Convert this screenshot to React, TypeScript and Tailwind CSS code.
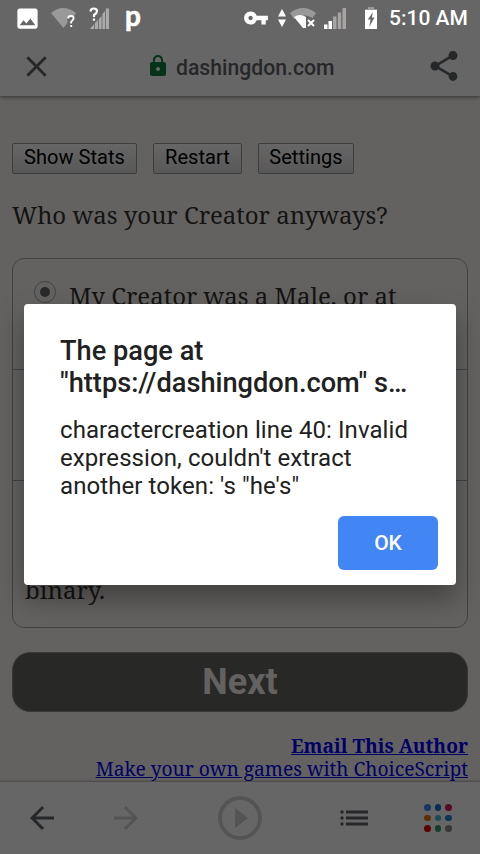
import { MdArrowBack, MdArrowForward, MdClose, MdImage, MdLock, MdShare, MdVpnKey } from "react-icons/md";

const apps = [
  "#4285f4", "#1a73c8", "#d81b60",
  "#e8750c", "#4fb3d9", "#1e88d8",
  "#e60000", "#2e9e6b", "#8c8c8c",
];

function StatusBar() {
  return (
    <div className="absolute inset-x-0 top-0 z-20 flex h-9 items-center text-white">
      <MdImage size={27} className="ml-[13.5px] shrink-0" />
      <svg className="ml-[9.5px] shrink-0" width="28" height="24" viewBox="0 0 28 24">
        <path d="M1 7Q13 -3 26 7L24 10Q18 8 17 14L18 16L13.5 22Z" fill="#999" />
        <path d="M18.2 12.5Q18.2 10 21 10Q23.6 10 23.6 12.3Q23.6 14 21.2 15.6V17.5M21.2 19V21" fill="none" stroke="#fff" strokeWidth="1.9" />
      </svg>
      <svg className="ml-[10px] shrink-0" width="24" height="26" viewBox="0 0 24 26">
        <path d="M2.5 24V23L6.2 19V24ZM7 24V18L10 15V24ZM10.8 24V14L13.6 11V24ZM14.4 24V9L17 6V24ZM17.8 24V3.5H21V24Z" fill="#aaa" />
        <path d="M2.6 6.6Q2.6 3.5 5.8 3.5Q9 3.5 9 6.3Q9 8.2 6 10V12M6 13.5V15.7" fill="none" stroke="#fff" strokeWidth="2.2" />
      </svg>
      <span className="-mt-[7px] ml-[13px] w-[20px] font-['Lato',sans-serif] text-[28px] leading-7 font-bold [-webkit-text-stroke:0.6px_#fff]">p</span>
      <MdVpnKey size={26} className="ml-[98px] shrink-0" />
      <svg className="ml-[9px] shrink-0" width="8" height="18" viewBox="0 0 8 18">
        <path d="M0 7.5L4 0L8 7.5ZM0 10.5H8L4 18Z" fill="#fff" />
      </svg>
      <svg className="ml-[4px] shrink-0" width="28" height="24" viewBox="0 0 28 24">
        <path d="M0 7Q13 -3 26 7L22.5 12Q13 6 4 13Z" fill="#999" />
        <path d="M4 11Q10 7 16 11V22H13Z" fill="#fff" />
        <path d="M18 14L24 20M24 14L18 20" stroke="#fff" strokeWidth="2" />
      </svg>
      <svg className="ml-[6px] shrink-0" width="24" height="24" viewBox="0 0 24 24">
        <path d="M0 18.5H3.5V23H0ZM4.5 15H8V23H4.5Z" fill="#fff" />
        <path d="M9 10.5H12.5V23H9ZM13.8 6.5H17.2V23H13.8ZM18.5 2H22V23H18.5Z" fill="#a9a4a4" />
      </svg>
      <svg className="ml-[17px] shrink-0" width="12" height="22" viewBox="0 0 12 22">
        <path d="M3 0H9V2H12V5H0V2H3Z" fill="#999" />
        <path d="M0 3H12V22H0Z" fill="#fff" />
        <path d="M8 5L2.8 12.5H5.6L4.2 20L9.5 10.5H6.8Z" fill="#666" />
      </svg>
      <span className="ml-[12px] pt-[2px] text-[21px] font-medium whitespace-nowrap">5:10 AM</span>
    </div>
  );
}

function AddressBar() {
  return (
    <header className="relative flex h-24 shrink-0 items-center bg-white pt-9 text-[#5f6368] shadow-[0_1px_4px_rgba(0,0,0,0.5)]">
      <MdClose size={35} className="ml-[18.5px]" />
      <div className="ml-[92.5px] flex items-center">
        <MdLock size={24} className="text-[#0b8043]" />
        <span className="ml-[6px] pt-[4px] text-[21.2px] font-medium">dashingdon.com</span>
      </div>
      <MdShare size={36} className="mr-[18px] ml-auto" />
    </header>
  );
}

function ToolButton({ label, width }: { label: string; width: string }) {
  return (
    <button className={`${width} h-[31px] rounded-[2px] border border-[#9a9a9a] bg-linear-to-b from-white to-[#dcdcdc] pb-[3px] text-[20px] leading-[26px] tracking-[0.05px] text-black`}>
      {label}
    </button>
  );
}

function Page() {
  return (
    <main className="flex-1 px-3 pt-[47px] font-['Noto_Serif','DejaVu_Serif_Condensed','DejaVu_Serif',serif] text-[#333]">
      <div className="flex gap-4 font-['Roboto',sans-serif]">
        <ToolButton label="Show Stats" width="w-[125px]" />
        <ToolButton label="Restart" width="w-[89px]" />
        <ToolButton label="Settings" width="w-[96px]" />
      </div>

      <p className="mt-[23px] text-[24px] leading-9 whitespace-nowrap">Who was your Creator anyways?</p>

      <div className="mt-[25px] flex h-[370px] flex-col rounded-xl border border-[#a2a6aa] text-[24px] leading-8">
        <div className="flex h-[111px] border-b border-[#a2a6aa] pt-[21px] pl-[21px]">
          <span className="mt-px flex size-[22px] items-center justify-center rounded-full border border-[#a2a6aa]">
            <span className="size-[10px] rounded-full bg-[#666]" />
          </span>
          <span className="ml-[13px] whitespace-nowrap">My Creator was a Male, or at</span>
        </div>
        <div className="h-[111px] border-b border-[#a2a6aa]" />
        <div className="flex flex-1 items-end pb-[21px] pl-3">binary.</div>
      </div>

      <button className="mt-6 h-[60px] w-full rounded-[18px] border border-[#909090] bg-[#646460] font-['Roboto',sans-serif] text-[36px] font-bold text-[#f7f4f1]">
        Next
      </button>

      <div className="mt-[22px] flex flex-col items-end text-[19.2px] leading-[23px] text-[#0000ff] underline">
        <a className="font-bold whitespace-nowrap">Email This Author</a>
        <a className="whitespace-nowrap">Make your own games with ChoiceScript</a>
      </div>
    </main>
  );
}

function BottomBar() {
  return (
    <nav className="relative flex h-[72px] shrink-0 items-center bg-white text-[#5f6368] shadow-[0_-1px_2px_rgba(0,0,0,0.3)]">
      <MdArrowBack size={36} className="ml-6" />
      <MdArrowForward size={36} className="ml-12 text-[#d0d2d4]" />
      <svg className="ml-[74px]" width="44" height="44" viewBox="0 0 44 44">
        <circle cx="22" cy="22" r="20" fill="none" stroke="#d2d2d2" strokeWidth="4" />
        <path d="M17 12L30 22L17 32Z" fill="#d2d2d2" />
      </svg>
      <svg className="ml-[78px]" width="28" height="18" viewBox="0 0 28 18" fill="currentColor">
        {[3, 9, 15].map((y) => (
          <g key={y}>
            <circle cx="2" cy={y} r="1.7" />
            <rect x="6" y={y - 1.5} width="22" height="3" />
          </g>
        ))}
      </svg>
      <div className="ml-[56px] grid grid-cols-3 gap-[4px]">
        {apps.map((color) => (
          <span key={color} className="size-[6.5px] rounded-full" style={{ backgroundColor: color }} />
        ))}
      </div>
    </nav>
  );
}

function AlertDialog() {
  return (
    <div className="absolute inset-0 z-10 bg-black/60 px-6 pt-[304px]">
      <div className="flex h-[281px] flex-col rounded bg-white px-9 pt-[31px] text-[#212121] shadow-[0_14px_28px_rgba(0,0,0,0.35)]">
        <h1 className="text-[27.2px] leading-8 font-medium whitespace-nowrap">
          The page at
          <br />
          "https://dashingdon.com" s…
        </h1>
        <p className="mt-[17px] text-[24px] leading-7 tracking-[0.08px] whitespace-nowrap">
          charactercreation line 40: Invalid
          <br />
          expression, couldn't extract
          <br />
          another token: 's "he's"
        </p>
        <button className="mt-[16px] -mr-[18px] h-[54px] w-[100px] self-end rounded-md bg-[#4285f4] pt-[2px] text-[21px] font-medium text-white">
          OK
        </button>
      </div>
    </div>
  );
}

export default function App() {
  return (
    <div className="relative flex h-[854px] w-[480px] flex-col overflow-hidden bg-[#f9f6f0] font-['Roboto',sans-serif]">
      <StatusBar />
      <AddressBar />
      <Page />
      <BottomBar />
      <AlertDialog />
    </div>
  );
}
